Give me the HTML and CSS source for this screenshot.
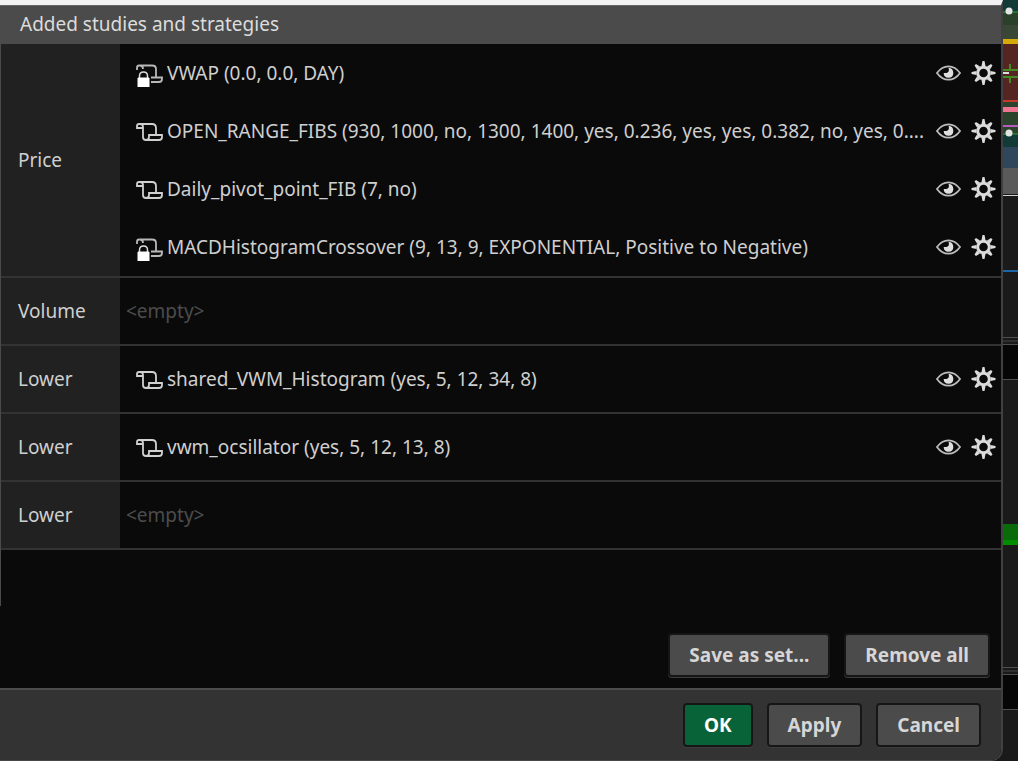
FILE: index.html
```html
<!DOCTYPE html>
<html lang="en">
<head>
    <meta charset="UTF-8">
    <meta name="viewport" content="width=device-width, initial-scale=1.0">
    <title>Studies and strategies</title>
    <link rel="stylesheet" href="styles.css">
</head>
<body>
    <!-- shared icons -->
    <svg class="sprite" aria-hidden="true">
        <symbol id="scroll" viewBox="0 0 28 28">
            <path d="M8 11H2V9Q2 7 4 7H17Q21 7 21 11V18M5 7Q8 7 8 10V20Q8 23 11 23H24Q27 23 27 20V18H14V20Q14 23 11 23" fill="none" stroke="#d0d0d0" stroke-width="1.8"/>
        </symbol>
        <symbol id="scroll-lock" viewBox="0 0 28 28">
            <path d="M2 11V9Q2 6.500 4 6.500H17Q21 6.500 21 10V18.500M5 6.500Q8 6.500 8 10M16 18.500H27V20Q27 23 24 23H16" fill="none" stroke="#b8b8b8" stroke-width="1.8"/>
            <path d="M4.500 20V17Q4.500 13 8.500 13T12.500 17V20" fill="none" stroke="#dcdcdc" stroke-width="1.5"/>
            <path d="M3 19H14V28H3Z" fill="#fff" stroke="#fff" stroke-linejoin="round"/>
        </symbol>
        <symbol id="eye" viewBox="0 0 26 18">
            <path d="M1 9Q6 2 13 2T25 9Q20 16 13 16T1 9Z" fill="none" stroke="#bdbdbd" stroke-width="1.8"/>
            <path d="M13 3.500Q18 4 18 9T13 14T8 9H11Q14.500 8 13 3.500Z" fill="#dedede"/>
        </symbol>
        <symbol id="gear" viewBox="-12 -12 24 24">
            <path d="M-2 -7L-1 -12H1L2 -7ZM-2 7L-1 12H1L2 7ZM-7 -2L-12 -1V1L-7 2ZM7 -2L12 -1V1L7 2ZM-6.500 -3.500L-9 -7.500L-7.500 -9L-3.500 -6.500ZM6.500 -3.500L9 -7.500L7.500 -9L3.500 -6.500ZM-6.500 3.500L-9 7.500L-7.500 9L-3.500 6.500ZM6.500 3.500L9 7.500L7.500 9L3.500 6.500Z" fill="#dcdcdc"/>
            <circle r="5.800" fill="none" stroke="#dcdcdc" stroke-width="3"/>
        </symbol>
    </svg>

    <div class="screen">
        <main class="dialog">
            <h1>Added studies and strategies</h1>

            <div class="list">
                <table>
                    <tbody>
                        <tr>
                            <th scope="row">Price</th>
                            <td>
                                <div class="study">
                                    <svg class="type"><use href="#scroll-lock"/></svg>
                                    <span class="name">VWAP (0.0, 0.0, DAY)</span>
                                    <button class="icon" aria-label="Show"><svg><use href="#eye"/></svg></button>
                                    <button class="icon" aria-label="Settings"><svg><use href="#gear"/></svg></button>
                                </div>
                                <div class="study">
                                    <svg class="type"><use href="#scroll"/></svg>
                                    <span class="name">OPEN_RANGE_FIBS (930, 1000, no, 1300, 1400, yes, 0.236, yes, yes, 0.382, no, yes, 0....</span>
                                    <button class="icon" aria-label="Show"><svg><use href="#eye"/></svg></button>
                                    <button class="icon" aria-label="Settings"><svg><use href="#gear"/></svg></button>
                                </div>
                                <div class="study">
                                    <svg class="type"><use href="#scroll"/></svg>
                                    <span class="name">Daily_pivot_point_FIB (7, no)</span>
                                    <button class="icon" aria-label="Show"><svg><use href="#eye"/></svg></button>
                                    <button class="icon" aria-label="Settings"><svg><use href="#gear"/></svg></button>
                                </div>
                                <div class="study">
                                    <svg class="type"><use href="#scroll-lock"/></svg>
                                    <span class="name">MACDHistogramCrossover (9, 13, 9, EXPONENTIAL, Positive to Negative)</span>
                                    <button class="icon" aria-label="Show"><svg><use href="#eye"/></svg></button>
                                    <button class="icon" aria-label="Settings"><svg><use href="#gear"/></svg></button>
                                </div>
                            </td>
                        </tr>
                        <tr>
                            <th scope="row">Volume</th>
                            <td class="empty">&lt;empty&gt;</td>
                        </tr>
                        <tr>
                            <th scope="row">Lower</th>
                            <td>
                                <div class="study">
                                    <svg class="type"><use href="#scroll"/></svg>
                                    <span class="name">shared_VWM_Histogram (yes, 5, 12, 34, 8)</span>
                                    <button class="icon" aria-label="Show"><svg><use href="#eye"/></svg></button>
                                    <button class="icon" aria-label="Settings"><svg><use href="#gear"/></svg></button>
                                </div>
                            </td>
                        </tr>
                        <tr>
                            <th scope="row">Lower</th>
                            <td>
                                <div class="study">
                                    <svg class="type"><use href="#scroll"/></svg>
                                    <span class="name">vwm_ocsillator (yes, 5, 12, 13, 8)</span>
                                    <button class="icon" aria-label="Show"><svg><use href="#eye"/></svg></button>
                                    <button class="icon" aria-label="Settings"><svg><use href="#gear"/></svg></button>
                                </div>
                            </td>
                        </tr>
                        <tr>
                            <th scope="row">Lower</th>
                            <td class="empty">&lt;empty&gt;</td>
                        </tr>
                    </tbody>
                </table>
            </div>

            <div class="set-actions">
                <button class="btn">Save as set...</button>
                <button class="btn">Remove all</button>
            </div>

            <footer>
                <button class="btn ok">OK</button>
                <button class="btn">Apply</button>
                <button class="btn">Cancel</button>
            </footer>
        </main>

        <!-- edge of the chart behind the dialog -->
        <svg class="chart" viewBox="0 0 15 761" preserveAspectRatio="none" aria-hidden="true">
            <path d="M0 0H15V761H0Z" fill="#1a1a1a"/>
            <path d="M0 0H15V12H0Z" fill="#123b37"/>
            <path d="M0 12H15V25H0Z" fill="#2a4028"/>
            <path d="M0 25H15V39H0Z" fill="#384835"/>
            <path d="M0 39H15V44H0Z" fill="#d6aa08"/>
            <path d="M0 44H15V100H0Z" fill="#552522"/>
            <path d="M0 100H15V102H0Z" fill="#c8382c"/>
            <path d="M0 102H15V134H0Z" fill="#2c432b"/>
            <path d="M0 107H15V112H0Z" fill="#ee7490"/>
            <path d="M0 125H15V127H0Z" fill="#b85abf"/>
            <path d="M0 134H15V147H0Z" fill="#123b37"/>
            <path d="M0 147H15V168H0Z" fill="#30465a"/>
            <path d="M0 168H15V194H0Z" fill="#5a5a5a"/>
            <path d="M0 195H15V196H0Z" fill="#d0d0d0"/>
            <path d="M0 12H15M0 134H15" stroke="#35a035"/>
            <path d="M0 70H15M0 77H15M7 64V69M7 78V83" stroke="#438a22" stroke-width="2"/>
            <path d="M0 73H6" stroke="#ddd" stroke-width="2"/>
            <circle cx="6" cy="11" r="3.500" fill="#e4e4e4"/>
            <circle cx="6" cy="133" r="3.500" fill="#e4e4e4"/>
            <path d="M0 270H15V272H0Z" fill="#1b66a8"/>
            <path d="M0 345H15V379H0ZM0 675H15V709H0Z" fill="#060606"/>
            <path d="M0 337.500H15M0 344.500H15M0 379.500H15M0 667.500H15M0 674.500H15M0 709.500H15" stroke="#505050"/>
            <path d="M0 341H15M0 671H15" stroke="#303030" stroke-width="2"/>
            <path d="M0 524H15V541H0Z" fill="#096b09"/>
            <path d="M0 540H15V545H0Z" fill="#008e00"/>
        </svg>
    </div>
</body>
</html>
```
FILE: styles.css
```css
*{box-sizing: border-box}

body{
    margin: 0;
    background-color: #1a1a1a;
    color: #cfcfcf;
    font-family: "Noto Sans", "Open Sans", sans-serif;
    font-size: 19px;
    line-height: 24px;
}

.sprite{
    display: block;
    width: 0;
    height: 0;
}

.screen{
    display: flex;
    min-height: 100vh;
    background-color: #1a1a1a;
}

.dialog{
    display: flex;
    flex-direction: column;
    flex: 1;
    min-width: 0;
    background-color: #0a0a0a;
    border-top: 5px solid #f2f2f2;
    border-right: 2px solid #404040;
    border-bottom: 1px solid #484848;
    border-bottom-right-radius: 12px;
    overflow: hidden;
}

.chart{
    width: 15px;
    height: 100vh;
}

h1{
    margin: 0;
    padding: 6px 20px 8px;
    background-color: #4b4b4b;
    border-top: 1px solid #666;
    font-size: 19px;
    font-weight: normal;
    color: #dcdcdc;
}

.list{
    flex: 1;
    border-left: 1px solid #4a4a4a;
}

table{
    width: 100%;
    table-layout: fixed;
    border-collapse: collapse;
}

tr{
    height: 68px;
    border-bottom: 2px solid #333;
}

th{
    width: 119px;
    padding: 0 17px;
    background-color: #212121;
    font-weight: normal;
    text-align: left;
}

td{padding: 0}

td.empty{
    padding-left: 6px;
    color: #4c4c4c;
}

.study{
    display: flex;
    align-items: center;
    height: 58px;
    padding: 0 5px 0 15px;
}

.type{
    flex: none;
    width: 28px;
    height: 28px;
    margin-right: 4px;
}

.name{
    flex: 1;
    min-width: 0;
    overflow: hidden;
    white-space: nowrap;
}

.icon{
    flex: none;
    height: 24px;
    margin-left: 10px;
    padding: 0;
    border: none;
    background: none;
}

.icon svg{
    display: block;
    width: 25px;
    height: 24px;
}

.set-actions{
    display: flex;
    justify-content: flex-end;
    gap: 14px;
    padding: 27px 11px 11px;
}

footer{
    display: flex;
    justify-content: flex-end;
    gap: 14px;
    padding: 13px 20px;
    background-color: #333;
    border-top: 2px solid #4c4c4c;
}

.btn{
    height: 44px;
    padding: 0 19px;
    background-color: #4b4b4b;
    border: 2px solid #161616;
    border-radius: 4px;
    box-shadow: 0 1px #3c3c3c;
    color: #d6d6d6;
    font-family: inherit;
    font-size: 19px;
    font-weight: bold;
}

.ok{
    background-color: #096339;
    color: #fff;
}
```
